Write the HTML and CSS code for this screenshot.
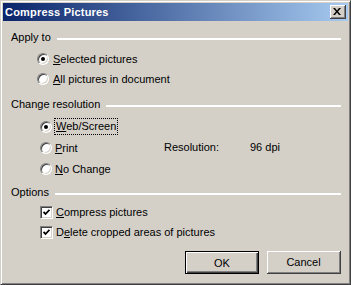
FILE: index.html
```html
<!DOCTYPE html>
<html lang="en">
<head>
    <meta charset="UTF-8">
    <title>Compress Pictures</title>
    <link rel="stylesheet" href="styles.css">
</head>
<body>
    <div class="window">
        <div class="titlebar">
            <span class="title">Compress Pictures</span>
            <button class="close" type="button" aria-label="Close">
                <svg width="8" height="7" viewBox="0 0 8 7">
                    <path d="M0 0h2l2 2.5L6 0h2L5 3.5 8 7H6L4 4.5 2 7H0l3-3.5z" fill="#000"/>
                </svg>
            </button>
        </div>

        <div class="content">
            <div class="heading">
                <span>Apply to</span>
                <span class="rule"></span>
            </div>
            <div class="options apply">
                <label class="row">
                    <span class="radio checked"></span>
                    <span><u>S</u>elected pictures</span>
                </label>
                <label class="row">
                    <span class="radio"></span>
                    <span><u>A</u>ll pictures in document</span>
                </label>
            </div>

            <div class="heading">
                <span>Change resolution</span>
                <span class="rule"></span>
            </div>
            <div class="resolution">
                <div class="options res">
                    <label class="row">
                        <span class="radio checked"></span>
                        <span class="focus"><u>W</u>eb/Screen</span>
                    </label>
                    <label class="row">
                        <span class="radio"></span>
                        <span><u>P</u>rint</span>
                    </label>
                    <label class="row">
                        <span class="radio"></span>
                        <span><u>N</u>o Change</span>
                    </label>
                </div>
                <div class="res-info">
                    <span class="res-label">Resolution:</span>
                    <span>96 dpi</span>
                </div>
            </div>

            <div class="heading">
                <span>Options</span>
                <span class="rule"></span>
            </div>
            <div class="options checks">
                <label class="row">
                    <span class="check">
                        <svg width="7" height="7" viewBox="0 0 7 7"><path d="M0.5 3l2 2 4-4.2" fill="none" stroke="#000" stroke-width="1.8"/></svg>
                    </span>
                    <span><u>C</u>ompress pictures</span>
                </label>
                <label class="row">
                    <span class="check">
                        <svg width="7" height="7" viewBox="0 0 7 7"><path d="M0.5 3l2 2 4-4.2" fill="none" stroke="#000" stroke-width="1.8"/></svg>
                    </span>
                    <span>D<u>e</u>lete cropped areas of pictures</span>
                </label>
            </div>

            <div class="buttons">
                <button class="btn default" type="button">OK</button>
                <button class="btn" type="button">Cancel</button>
            </div>
        </div>
    </div>
</body>
</html>
```

FILE: styles.css
```css
* {
    margin: 0;
    padding: 0;
    box-sizing: border-box;
}

body {
    background: #d4d0c8;
    font-family: 'Liberation Sans', Arial, sans-serif;
    font-size: 11px;
    color: #000;
}

.window {
    width: 351px;
    height: 285px;
    background: #d4d0c8;
    border-top: 1px solid #d4d0c8;
    border-left: 1px solid #d4d0c8;
    border-right: 1px solid #404040;
    border-bottom: 1px solid #404040;
    box-shadow: inset 1px 1px 0 #fff, inset -1px -1px 0 #808080;
    padding: 2px;
}

.titlebar {
    height: 18px;
    background: linear-gradient(to right, #0a246a, #a6caf0);
    display: flex;
    align-items: center;
    justify-content: space-between;
    padding: 0 2px;
}

.title {
    color: #fff;
    font-weight: bold;
    font-size: 11px;
    letter-spacing: 0.2px;
}

.close {
    width: 16px;
    height: 14px;
    background: #d4d0c8;
    border: none;
    border-right: 1px solid #404040;
    border-bottom: 1px solid #404040;
    box-shadow: inset 1px 1px 0 #fff, inset -1px -1px 0 #808080;
    display: flex;
    align-items: center;
    justify-content: center;
    padding-right: 1px;
}

.content {
    padding: 9px 7px 0 8px;
}

.heading {
    height: 14px;
    display: flex;
    align-items: center;
    gap: 6px;
}

.rule {
    flex: 1;
    height: 2px;
    background: #fff;
    margin-top: 3px;
}

.options {
    display: flex;
    flex-direction: column;
}

.row {
    display: flex;
    align-items: center;
    height: 20px;
}

.apply {
    margin: 5px 0 8px 26px;
}

.apply .radio {
    margin-right: 4px;
}

.resolution {
    display: flex;
    margin: 5px 0 6px 29px;
}

.res {
    width: 124px;
}

.res .row {
    height: 21px;
}

.res .radio {
    margin-right: 3px;
}

.focus {
    outline: 1px dotted #000;
    padding: 0 1px;
    line-height: 15px;
}

.res-info {
    display: flex;
    align-items: center;
    height: 21px;
    margin-top: 20px;
}

.res-label {
    width: 86px;
}

.checks {
    margin: 3px 0 0 29px;
}

.checks .check {
    margin-right: 3px;
}

.radio {
    width: 12px;
    height: 12px;
    border-radius: 50%;
    background: #fff;
    border: 1px solid;
    border-color: #808080 #fff #fff #808080;
    box-shadow: inset 1px 1px 0 #404040, inset -1px -1px 0 #d4d0c8;
    position: relative;
    flex: none;
}

.radio.checked::after {
    content: '';
    position: absolute;
    left: 3px;
    top: 3px;
    width: 4px;
    height: 4px;
    border-radius: 50%;
    background: #000;
}

.check {
    width: 13px;
    height: 13px;
    background: #fff;
    border: 1px solid;
    border-color: #808080 #fff #fff #808080;
    box-shadow: inset 1px 1px 0 #404040, inset -1px -1px 0 #d4d0c8;
    display: flex;
    align-items: center;
    justify-content: center;
    flex: none;
}

.buttons {
    display: flex;
    justify-content: flex-end;
    gap: 8px;
    margin-top: 9px;
}

.btn {
    width: 74px;
    height: 23px;
    background: #d4d0c8;
    font-family: 'Liberation Sans', Arial, sans-serif;
    font-size: 11px;
    color: #000;
    border: none;
    border-right: 1px solid #404040;
    border-bottom: 1px solid #404040;
    box-shadow: inset 1px 1px 0 #fff, inset -1px -1px 0 #808080;
}

.btn.default {
    border: 1px solid #000;
    box-shadow: inset 1px 1px 0 #fff, inset -1px -1px 0 #404040, inset -2px -2px 0 #808080;
}
```
